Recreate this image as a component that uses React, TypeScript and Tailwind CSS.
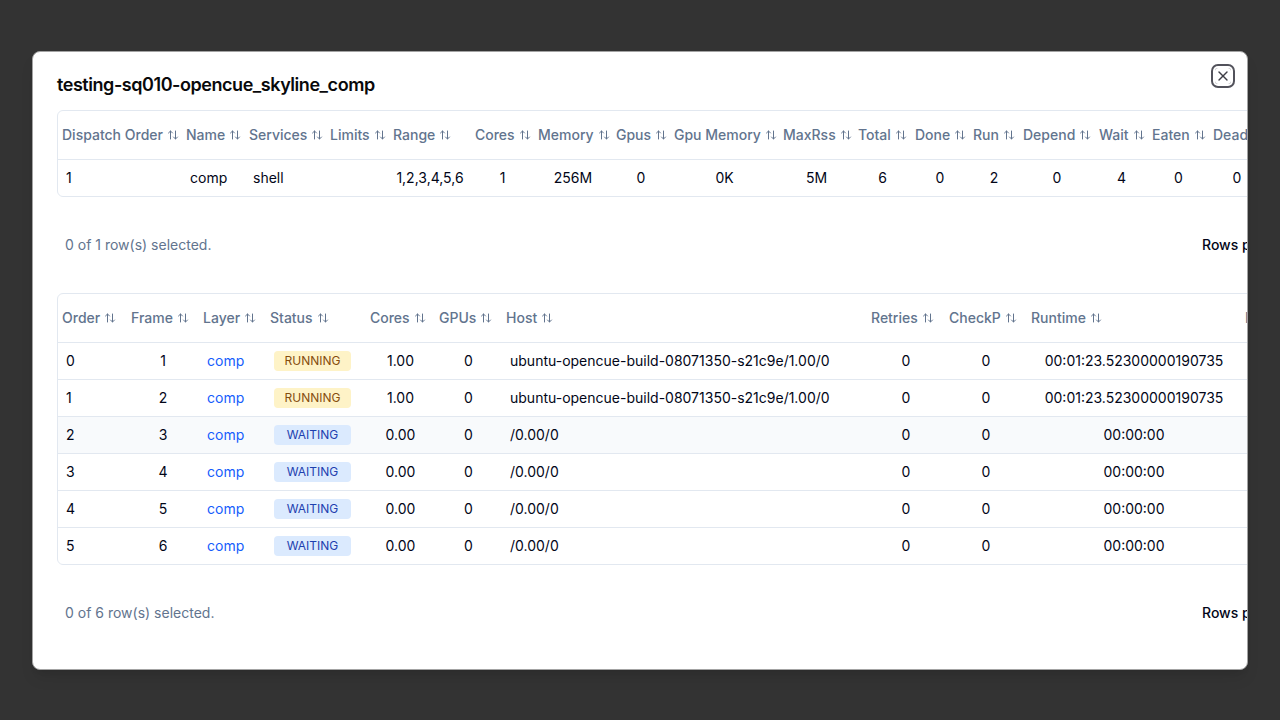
import { ArrowUpDown, X, ChevronDown, ChevronLeft, ChevronRight, ChevronsLeft, ChevronsRight } from "lucide-react";

type Col = { label: string; w: string; center?: boolean };

const LAYER_COLS: Col[] = [
  { label: "Dispatch Order", w: "w-[124px]" },
  { label: "Name", w: "w-[63px]" },
  { label: "Services", w: "w-[81px]" },
  { label: "Limits", w: "w-[63px]" },
  { label: "Range", w: "w-[82px]", center: true },
  { label: "Cores", w: "w-[63px]", center: true },
  { label: "Memory", w: "w-[78px]", center: true },
  { label: "Gpus", w: "w-[58px]", center: true },
  { label: "Gpu Memory", w: "w-[109px]", center: true },
  { label: "MaxRss", w: "w-[75px]", center: true },
  { label: "Total", w: "w-[57px]", center: true },
  { label: "Done", w: "w-[58px]", center: true },
  { label: "Run", w: "w-[50px]", center: true },
  { label: "Depend", w: "w-[76px]", center: true },
  { label: "Wait", w: "w-[53px]", center: true },
  { label: "Eaten", w: "w-[61px]", center: true },
  { label: "Dead", w: "w-[56px]", center: true },
  { label: "Timeout", w: "w-[80px]", center: true },
  { label: "Timeout LLU", w: "w-[110px]", center: true },
  { label: "Tags", w: "w-[90px]", center: true },
];

const LAYER_ROWS = [
  ["1", "comp", "shell", "", "1,2,3,4,5,6", "1", "256M", "0", "0K", "5M", "6", "0", "2", "0", "4", "0", "0", "0", "0", "general"],
];

const FRAME_COLS: Col[] = [
  { label: "Order", w: "w-[69px]" },
  { label: "Frame", w: "w-[72px]", center: true },
  { label: "Layer", w: "w-[67px]" },
  { label: "Status", w: "w-[100px]" },
  { label: "Cores", w: "w-[69px]", center: true },
  { label: "GPUs", w: "w-[67px]", center: true },
  { label: "Host", w: "w-[365px]" },
  { label: "Retries", w: "w-[78px]", center: true },
  { label: "CheckP", w: "w-[82px]", center: true },
  { label: "Runtime", w: "w-[214px]", center: true },
  { label: "Last Line", w: "w-[140px]" },
  { label: "Memory", w: "w-[90px]", center: true },
];

type Frame = { order: string; frame: string; status: "RUNNING" | "WAITING"; cores: string; host: string; runtime: string };

const FRAMES: Frame[] = [
  { order: "0", frame: "1", status: "RUNNING", cores: "1.00", host: "ubuntu-opencue-build-08071350-s21c9e/1.00/0", runtime: "00:01:23.52300000190735" },
  { order: "1", frame: "2", status: "RUNNING", cores: "1.00", host: "ubuntu-opencue-build-08071350-s21c9e/1.00/0", runtime: "00:01:23.52300000190735" },
  { order: "2", frame: "3", status: "WAITING", cores: "0.00", host: "/0.00/0", runtime: "00:00:00" },
  { order: "3", frame: "4", status: "WAITING", cores: "0.00", host: "/0.00/0", runtime: "00:00:00" },
  { order: "4", frame: "5", status: "WAITING", cores: "0.00", host: "/0.00/0", runtime: "00:00:00" },
  { order: "5", frame: "6", status: "WAITING", cores: "0.00", host: "/0.00/0", runtime: "00:00:00" },
];

function HeadCell({ col }: { col: Col }) {
  return (
    <th className={`${col.w} h-[49px] border-b border-slate-200 pl-1 text-left align-middle font-medium whitespace-nowrap text-slate-500`}>
      <span className="inline-flex items-center gap-1">
        {col.label}
        <ArrowUpDown className="h-3 w-3" strokeWidth={2} />
      </span>
    </th>
  );
}

function Cell({ col, last, children }: { col: Col; last: boolean; children: React.ReactNode }) {
  return (
    <td
      className={`whitespace-nowrap align-middle ${col.center ? "text-center" : "pl-2 text-left"} ${
        last ? "h-9" : "h-[37px] border-b border-slate-200"
      }`}
    >
      {children}
    </td>
  );
}

function StatusBadge({ status }: { status: Frame["status"] }) {
  const running = status === "RUNNING";
  return (
    <span
      className={`inline-flex h-5 w-[77px] items-center justify-center rounded text-xs ${
        running ? "bg-[#fef3c7] text-[#854d0e]" : "bg-[#dbeafe] text-[#1e40af]"
      }`}
    >
      {status}
    </span>
  );
}

function Pagination({ selected, total }: { selected: number; total: number }) {
  return (
    <div className="flex items-center px-2 py-4">
      <div className="w-[1137px] shrink-0 text-sm text-slate-500">
        {selected} of {total} row(s) selected.
      </div>
      <div className="flex shrink-0 items-center gap-8">
        <div className="flex items-center gap-2">
          <p className="text-sm font-medium whitespace-nowrap text-slate-950">Rows per page</p>
          <div className="flex h-8 w-[70px] items-center justify-between rounded-md border border-slate-200 px-3 text-sm">
            10
            <ChevronDown className="h-4 w-4 opacity-50" />
          </div>
        </div>
        <div className="text-sm font-medium whitespace-nowrap">Page 1 of 1</div>
        <div className="flex items-center gap-2">
          {[ChevronsLeft, ChevronLeft, ChevronRight, ChevronsRight].map((Icon, i) => (
            <div key={i} className="flex h-8 w-8 items-center justify-center rounded-md border border-slate-200">
              <Icon className="h-4 w-4" />
            </div>
          ))}
        </div>
      </div>
    </div>
  );
}

export default function App() {
  return (
    <div className="flex h-screen w-full items-center justify-center bg-[#333333] font-['Inter',sans-serif]">
      <div className="relative w-[1216px] overflow-hidden rounded-lg border border-[#a3a3a3] bg-white shadow-lg">
        <div className="flex flex-col gap-4 p-6">
          <h2 className="text-lg leading-none font-semibold tracking-tight text-[#09090b]">
            testing-sq010-opencue_skyline_comp
          </h2>

          {/* layers table */}
          <div className="w-max rounded-md border border-slate-200">
            <table className="border-separate border-spacing-0 text-sm text-slate-950">
              <thead>
                <tr>
                  {LAYER_COLS.map((c) => (
                    <HeadCell key={c.label} col={c} />
                  ))}
                </tr>
              </thead>
              <tbody>
                {LAYER_ROWS.map((row, ri) => (
                  <tr key={ri}>
                    {row.map((v, i) => (
                      <Cell key={i} col={LAYER_COLS[i]} last={ri === LAYER_ROWS.length - 1}>
                        {v}
                      </Cell>
                    ))}
                  </tr>
                ))}
              </tbody>
            </table>
          </div>

          <Pagination selected={0} total={1} />

          {/* frames table */}
          <div className="w-max rounded-md border border-slate-200">
            <table className="border-separate border-spacing-0 text-sm text-slate-950">
              <thead>
                <tr>
                  {FRAME_COLS.map((c) => (
                    <HeadCell key={c.label} col={c} />
                  ))}
                </tr>
              </thead>
              <tbody>
                {FRAMES.map((f, ri) => {
                  const last = ri === FRAMES.length - 1;
                  return (
                    <tr key={f.order} className={ri === 2 ? "bg-slate-50" : ""}>
                      <Cell col={FRAME_COLS[0]} last={last}>{f.order}</Cell>
                      <Cell col={FRAME_COLS[1]} last={last}>{f.frame}</Cell>
                      <Cell col={FRAME_COLS[2]} last={last}>
                        <span className="text-blue-600">comp</span>
                      </Cell>
                      <Cell col={FRAME_COLS[3]} last={last}>
                        <StatusBadge status={f.status} />
                      </Cell>
                      <Cell col={FRAME_COLS[4]} last={last}>{f.cores}</Cell>
                      <Cell col={FRAME_COLS[5]} last={last}>0</Cell>
                      <Cell col={FRAME_COLS[6]} last={last}>{f.host}</Cell>
                      <Cell col={FRAME_COLS[7]} last={last}>0</Cell>
                      <Cell col={FRAME_COLS[8]} last={last}>0</Cell>
                      <Cell col={FRAME_COLS[9]} last={last}>{f.runtime}</Cell>
                      <Cell col={FRAME_COLS[10]} last={last}>{""}</Cell>
                      <Cell col={FRAME_COLS[11]} last={last}>0K</Cell>
                    </tr>
                  );
                })}
              </tbody>
            </table>
          </div>

          <Pagination selected={0} total={6} />
        </div>

        {/* close button, shown focused */}
        <button className="absolute top-4 right-4 flex h-4 w-4 items-center justify-center rounded-[3px] text-[#3f3f46] ring-2 ring-[#52525b] ring-offset-2 ring-offset-white">
          <X className="h-4 w-4" strokeWidth={2} />
        </button>
      </div>
    </div>
  );
}
